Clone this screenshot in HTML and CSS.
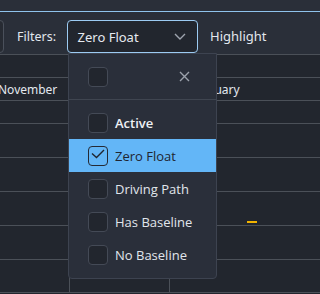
FILE: index.html
```html
<!DOCTYPE html>
<html>
<head>
<meta charset="utf-8">
<link rel="stylesheet" href="styles.css">
</head>
<body>
<div class="app">
  <div class="topstrip"></div>
  <div class="toolbar">
    <div class="leftbox"></div>
    <span class="label">Filters:</span>
    <div class="select">
      <span class="select-value">Zero Float</span>
      <svg class="chev" width="12" height="7" viewBox="0 0 12 7"><polyline points="1,1 6,6 11,1" fill="none" stroke="#9ea4ae" stroke-width="1.4"/></svg>
    </div>
    <span class="label hl">Highlight</span>
  </div>
  <div class="grid">
    <div class="row r-short"></div>
    <div class="row r-short"><span class="month m1">November</span><span class="month m2">January</span></div>
    <div class="row r-short"></div>
    <div class="row r-tall"></div>
    <div class="row r-tall"></div>
    <div class="row r-tall"><span class="bar"></span></div>
    <div class="row r-tall"></div>
    <div class="row r-last"><div class="cell c1"></div><div class="cell c2"></div><div class="cell c3"></div></div>
  </div>

  <div class="menu">
    <div class="menu-head">
      <span class="cb"></span>
      <svg class="clear" width="11" height="11" viewBox="0 0 11 11"><path d="M1 1L10 10M10 1L1 10" stroke="#9ca2ac" stroke-width="1.4" fill="none"/></svg>
    </div>
    <div class="menu-list">
      <div class="item"><span class="cb"></span><span class="txt bold">Active</span></div>
      <div class="item sel"><span class="cb on"><svg width="20" height="20" viewBox="0 0 20 20"><polyline points="4,8.5 8.5,12.5 16,5" fill="none" stroke="#1f2530" stroke-width="1.4"/></svg></span><span class="txt">Zero Float</span></div>
      <div class="item"><span class="cb"></span><span class="txt">Driving Path</span></div>
      <div class="item"><span class="cb"></span><span class="txt">Has Baseline</span></div>
      <div class="item"><span class="cb"></span><span class="txt">No Baseline</span></div>
    </div>
  </div>
</div>
</body>
</html>
```
FILE: styles.css
```css
html, body {
  margin: 0;
  padding: 0;
  background: #22262e;
  overflow: hidden;
}
.app {
  position: relative;
  width: 100%;
  min-width: 252px;
  height: 294px;
  overflow: hidden;
  font-family: "Noto Sans", "Open Sans", sans-serif;
}
.topstrip {
  height: 11px;
  background: #2a2f39;
  border-bottom: 1px solid #8fc3ec;
}
.toolbar {
  height: 34px;
  padding-top: 8px;
  background: #2a2f39;
  display: flex;
  align-items: flex-start;
  white-space: nowrap;
}
.leftbox {
  flex: none;
  box-sizing: border-box;
  width: 60px;
  height: 33px;
  margin-left: -56px;
  border: 1px solid #4a505b;
  border-radius: 4px;
  background: #272b33;
}
.label {
  flex: none;
  font-size: 12.5px;
  line-height: 33px;
  color: #e2e7ee;
  margin-left: 13px;
}
.select {
  flex: none;
  box-sizing: border-box;
  width: 131px;
  height: 33px;
  margin-left: 11px;
  border: 1.5px solid #9ccbf2;
  border-radius: 4px;
  background: #22262e;
  display: flex;
  align-items: center;
  padding-left: 9.5px;
  padding-right: 11px;
}
.select-value {
  flex: 1;
  font-size: 13px;
  color: #e6eaf0;
}
.chev {
  flex: none;
}
.hl {
  margin-left: 12px;
  font-size: 13px;
}
.grid {
  border-top: 1px solid #4b5058;
}
.row {
  position: relative;
  border-bottom: 1px solid #4b5058;
  box-sizing: border-box;
}
.r-short { height: 23px; }
.r-tall { height: 34px; }
.r-last { height: 33px; display: flex; }
.cell {
  flex: none;
  height: 100%;
  box-sizing: border-box;
}
.c1 { width: 70px; border-right: 1px solid #4b5058; }
.c2 { width: 100px; border-right: 1px solid #4b5058; }
.c3 { width: 100px; }
.month {
  position: absolute;
  top: 3px;
  font-size: 12px;
  color: #e3e8ee;
}
.m1 { left: -2px; }
.m2 { left: 197px; }
.bar {
  position: absolute;
  left: 247px;
  top: 29px;
  width: 10px;
  height: 2px;
  background: #f2b300;
}
.menu {
  position: absolute;
  left: 68px;
  top: 53px;
  width: 149px;
  height: 226px;
  box-sizing: border-box;
  background: #2a2f3a;
  border: 1px solid #3d4350;
  border-radius: 0 0 4px 4px;
  font-family: "Open Sans", "Noto Sans", sans-serif;
}
.menu-head {
  height: 45px;
  border-bottom: 1px solid #3f4550;
  display: flex;
  align-items: center;
  padding-left: 19px;
  padding-right: 26px;
  justify-content: space-between;
}
.menu-list {
  padding-top: 6px;
}
.item {
  height: 33px;
  display: flex;
  align-items: center;
  padding-left: 19px;
}
.item.sel {
  background: #63b6f7;
}
.cb {
  flex: none;
  box-sizing: border-box;
  width: 20px;
  height: 20px;
  border: 1px solid #444a56;
  border-radius: 4px;
  background: #22262e;
  display: block;
}
.cb.on {
  background: transparent;
  border: 1.5px solid #242a35;
  position: relative;
}
.cb.on svg {
  position: absolute;
  left: -1.5px;
  top: -1.5px;
}
.txt {
  margin-left: 7px;
  font-size: 13px;
  font-weight: 500;
  color: #e1e6ec;
}
.txt.bold {
  font-weight: 600;
  color: #eef1f5;
}
.sel .txt {
  font-weight: 400;
  color: #1f2530;
}
```
